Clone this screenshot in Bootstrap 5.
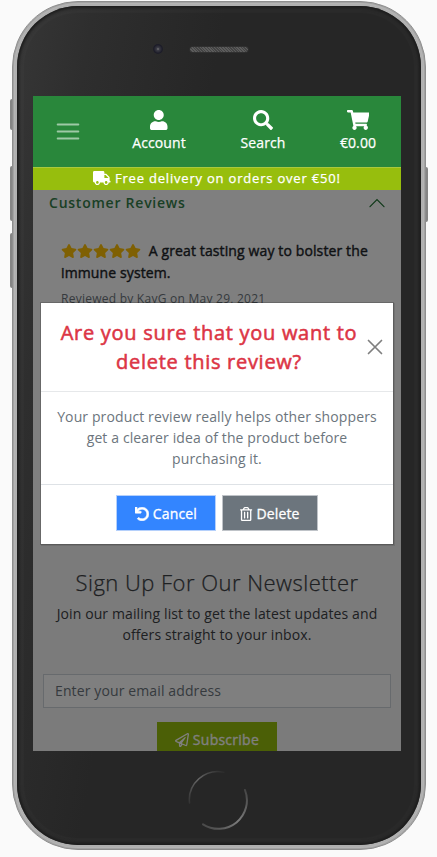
<!DOCTYPE html>
<html lang="en">
<head>
<meta charset="utf-8">
<meta name="viewport" content="width=device-width, initial-scale=1">
<title>Delete review</title>
<link rel="stylesheet" href="https://cdn.jsdelivr.net/npm/bootstrap@5.3.0/dist/css/bootstrap.min.css">
<style>
html, body { height: 857px; overflow: hidden; }
body { background: #fafafa; font-family: "Open Sans", sans-serif; font-size: 14px; line-height: 21px; color: #212529; }
.phone { width: 414px; height: 849px; margin: 1px 0 0 12px; border-radius: 66px; background: #b0b0b0; border: 1px solid #8e8e8e; box-shadow: inset 0 0 0 1px #a2a2a2, inset 0 0 0 2px #b4b4b4; padding: 4px; }
.bezel { height: 100%; border-radius: 61px; background: linear-gradient(100deg, #363636 0, #2e2e2e 14%, #262626 38%); box-shadow: inset 0 0 3px 2px #1c1c1c, inset 0 0 2px 7px rgba(255,255,255,.025); padding: 0 18px 0 16px; }
.side-key { position: absolute; width: 4px; background: #858585; border-radius: 2px 0 0 2px; }
.key-mute { left: 10px; top: 99px; height: 31px; }
.key-up { left: 10px; top: 166px; height: 55px; }
.key-down { left: 10px; top: 233px; height: 55px; }
.key-power { left: 425px; top: 167px; width: 3px; height: 55px; border-radius: 0 2px 2px 0; }
.earpiece { height: 90px; padding-top: 40px; padding-left: 104px; }
.lens { width: 10px; height: 10px; margin-top: -2px; border-radius: 50%; background: radial-gradient(circle, #777 0, #3a3a44 22%, #1c1c28 60%, #242428 100%); }
.grille { width: 60px; height: 7px; margin-left: 26px; border-radius: 4px; border: 1px solid #303030; background: repeating-linear-gradient(45deg, #5c5c5c 0 1px, #444 1px 2px); }
.screen { width: 368px; height: 655px; background: #fff; }
.top-nav { height: 71px; background: #29873b; color: #fff; }
.nav-tile { width: 104px; -webkit-text-stroke: .25px; padding-top: 14px; flex-shrink: 0; letter-spacing: .1px; }
.nav-last { width: 86px; }
.nav-tile svg { height: 20px; margin-bottom: 2px; }
.burger { width: 74px; padding-top: 21px; padding-left: 20px; text-align: left; flex-shrink: 0; }
.promo { height: 23px; font-size: 13px; line-height: 21px; background: #97be0d; border-top: 1px solid #a9c93c; color: #fff; -webkit-text-stroke: .25px; letter-spacing: .8px; }
.promo svg, .fa-inline { height: 14px; fill: currentColor; vertical-align: -2px; }
.content-area { height: 561px; }
.acc-head { height: 27px; padding: 2px 16px 0; color: #35804b; font-weight: 600; letter-spacing: .76px; }
.review { height: 323px; padding: 23px 28px 0 28px; line-height: 22px; }
.review-title { -webkit-text-stroke: .4px; letter-spacing: .12px; }
.stars { margin-right: 4px; letter-spacing: 0; }
.stars svg { width: 16px; height: 14px; fill: #ffc107; margin-top: -2px; display: inline-block; }
.review-by { font-size: 12px; color: #6c757d; margin-top: 4px; letter-spacing: .25px; }
.newsletter { height: 211px; background: #f6f6f6; padding-top: 29px; color: #3c4044; }
.news-title { font-size: 22px; line-height: 26px; font-weight: 300; margin: 0; letter-spacing: .48px; -webkit-text-stroke: .25px; }
.news-text { margin: 8px 0 29px; letter-spacing: .11px; }
.email-box { width: 348px; height: 34px; margin-left: 10px; font-size: 14px; border-radius: 0; border: 1px solid #ced4da; padding: 4px 11px 6px; letter-spacing: .12px; line-height: 21px; }
.email-box::placeholder { color: #6c757d; }
.btn-sub, .btn-flat { border-radius: 0; font-size: 14px; height: 35px; line-height: 21px; -webkit-text-stroke: .3px; padding: 6px 0; color: #fff; letter-spacing: .15px; }
.btn-sub { width: 120px; margin-top: 14px; padding-top: 5px; background: #97be0d; border: 0; letter-spacing: .25px; }
.dim { inset: 0; background: rgba(0,0,0,.5); }
.dialog-box { left: 8px; top: 113px; width: 352px; height: 241px; background: #fff; box-shadow: 0 0 0 1px rgba(0,0,0,.18), 1px 1px 0 1px rgba(0,0,0,.1); }
.dialog-head { height: 89px; border-bottom: 1px solid #e6e8ea; padding: 15px 10px 0 14px; }
.dialog-head svg { margin-top: 21px; }
.dialog-title { width: 308px; font-size: 20px; line-height: 29px; font-weight: 400; -webkit-text-stroke: .55px; color: #dc3545; letter-spacing: .71px; margin: 0; white-space: nowrap; }
.dialog-text { height: 93px; border-bottom: 1px solid #dee2e6; padding-top: 14px; color: #6c757d; letter-spacing: .12px; white-space: nowrap; }
.dialog-foot { padding-top: 10px; gap: 6px; }
.btn-cancel { width: 100px; height: 36px; background: #3385ff; border: 1px solid #b5d0fb; }
.btn-del { width: 96px; height: 36px; background: #6c757d; border: 1px solid #bfc3c8; }
.home { width: 60px; height: 60px; margin: 19px 0 0 155px; }
</style>
</head>
<body>
<div class="side-key key-mute"></div><div class="side-key key-up"></div><div class="side-key key-down"></div><div class="side-key key-power"></div>
<div class="phone position-relative">
 <div class="bezel">
  <div class="earpiece d-flex"><div class="lens ms-3"></div><div class="grille"></div></div>
  <div class="screen overflow-hidden">
   <nav class="top-nav d-flex text-center">
    <div class="burger"><svg width="30" height="30" viewBox="0 0 30 30" stroke="#fff" stroke-opacity=".55" stroke-width="2" stroke-linecap="round"><path d="M4.7 7.5h20.6M4.7 14.5h20.6M4.7 21.5h20.6"/></svg></div>
    <div class="nav-tile"><svg class="d-block mx-auto" viewBox="0 0 448 512" fill="#fff"><path d="M224 256c70.7 0 128-57.3 128-128S294.7 0 224 0 96 57.3 96 128s57.3 128 128 128zm89.6 32h-16.7c-22.2 10.2-46.9 16-72.9 16s-50.6-5.8-72.9-16h-16.7C60.2 288 0 348.2 0 422.4V464c0 26.5 21.5 48 48 48h352c26.5 0 48-21.5 48-48v-41.6c0-74.2-60.2-134.4-134.4-134.4z"/></svg>Account</div>
    <div class="nav-tile"><svg class="d-block mx-auto" viewBox="0 0 512 512" fill="#fff"><path d="M505 442.7L405.3 343c-4.5-4.5-10.6-7-17-7H372c27.6-35.3 44-79.7 44-128C416 93.1 322.9 0 208 0S0 93.1 0 208s93.1 208 208 208c48.3 0 92.7-16.4 128-44v16.3c0 6.4 2.5 12.5 7 17l99.7 99.7c9.4 9.4 24.6 9.4 33.9 0l28.3-28.3c9.4-9.4 9.4-24.6.1-34zM208 336c-70.7 0-128-57.2-128-128 0-70.7 57.2-128 128-128 70.7 0 128 57.2 128 128 0 70.7-57.2 128-128 128z"/></svg>Search</div>
    <div class="nav-tile nav-last"><svg class="d-block mx-auto" viewBox="0 0 576 512" fill="#fff"><path d="M528.12 301.319l47.273-208C578.806 78.301 567.391 64 551.99 64H159.208l-9.166-44.81C147.758 8.021 137.93 0 126.529 0H24C10.745 0 0 10.745 0 24v16c0 13.255 10.745 24 24 24h69.883l70.248 343.435C147.325 417.1 136 435.222 136 456c0 30.928 25.072 56 56 56s56-25.072 56-56c0-15.674-6.447-29.835-16.824-40h209.647C430.447 426.165 424 440.326 424 456c0 30.928 25.072 56 56 56s56-25.072 56-56c0-22.172-12.888-41.332-31.579-50.405l5.517-24.276c3.413-15.018-8.002-29.319-23.403-29.319H218.117l-6.545-32h293.145c11.206 0 20.92-7.754 23.403-18.681z"/></svg>€0.00</div>
   </nav>
   <div class="promo text-center text-nowrap"><svg viewBox="0 0 640 512"><path d="M624 352h-16V243.9c0-12.7-5.1-24.9-14.1-33.9L494 110.1c-9-9-21.2-14.1-33.9-14.1H416V48c0-26.5-21.5-48-48-48H48C21.5 0 0 21.5 0 48v320c0 26.5 21.5 48 48 48h16c0 53 43 96 96 96s96-43 96-96h128c0 53 43 96 96 96s96-43 96-96h48c8.8 0 16-7.2 16-16v-32c0-8.8-7.2-16-16-16zM160 464c-26.5 0-48-21.5-48-48s21.5-48 48-48 48 21.5 48 48-21.5 48-48 48zm320 0c-26.5 0-48-21.5-48-48s21.5-48 48-48 48 21.5 48 48-21.5 48-48 48zm80-208H416V144h44.1l99.9 99.9V256z"/></svg> Free delivery on orders over €50!</div>
   <main class="content-area position-relative">
    <div class="acc-head d-flex justify-content-between"><span>Customer Reviews</span><svg width="16" height="16" viewBox="0 0 16 16" class="mt-1" fill="none" stroke="#1d7030" stroke-width="1.2" stroke-linecap="round"><path d="M1 10.7 8 3.6l7 7.1"/></svg></div>
    <section class="review">
     <div class="review-title text-nowrap"><span class="stars"><svg viewBox="0 0 576 512"><path id="star" d="M259.3 17.8L194 150.2 47.9 171.5c-26.2 3.8-36.7 36.1-17.7 54.6l105.7 103-25 145.5c-4.5 26.3 23.2 46 46.4 33.7L288 439.6l130.7 68.7c23.2 12.2 50.9-7.4 46.4-33.7l-25-145.5 105.7-103c19-18.5 8.5-50.8-17.7-54.6L382 150.2 316.7 17.8c-11.7-23.6-45.6-23.9-57.4 0z"/></svg><svg viewBox="0 0 576 512"><use href="#star"/></svg><svg viewBox="0 0 576 512"><use href="#star"/></svg><svg viewBox="0 0 576 512"><use href="#star"/></svg><svg viewBox="0 0 576 512"><use href="#star"/></svg></span> A great tasting way to bolster the<br>immune system.</div>
     <div class="review-by">Reviewed by KayG on May 29, 2021</div>
    </section>
    <section class="newsletter text-center">
     <h2 class="news-title">Sign Up For Our Newsletter</h2>
     <p class="news-text">Join our mailing list to get the latest updates and<br>offers straight to your inbox.</p>
     <input class="form-control email-box" type="email" placeholder="Enter your email address">
     <button class="btn btn-sub"><svg class="fa-inline" viewBox="0 0 512 512"><path d="M440 6.5L24 246.4c-34.4 19.9-31.1 70.8 5.7 85.9L144 379.6V464c0 46.4 59.2 65.5 86.6 28.6l43.8-59.1 111.9 46.2c5.9 2.4 12.1 3.6 18.3 3.6 8.2 0 16.3-2.1 23.6-6.2 12.8-7.2 21.6-20 23.9-34.5l59.4-387.2c6.1-40.1-36.9-68.8-71.5-48.9zM192 464v-64.6l36.6 15.1L192 464zm212.6-28.7l-153.8-63.5L391 169.5c10.7-15.5-9.5-33.5-23.7-21.2L155.8 332.6 48 288 464 48l-59.4 387.3z"/></svg> Subscribe</button>
    </section>
    <div class="dim position-absolute"></div>
    <div class="dialog-box position-absolute text-center" role="dialog">
     <div class="dialog-head d-flex"><h5 class="dialog-title">Are you sure that you want to<br>delete this review?</h5><svg class="ms-auto" width="16" height="16" viewBox="0 0 16 16" stroke="#7f7f7f" stroke-width="1.7" stroke-linecap="round"><path d="M1.5 1.5l13 13M14.5 1.5l-13 13"/></svg></div>
     <div class="dialog-text">Your product review really helps other shoppers<br>get a clearer idea of the product before<br>purchasing it.</div>
     <div class="dialog-foot d-flex justify-content-center">
      <button class="btn btn-flat btn-cancel"><svg class="fa-inline" viewBox="0 0 512 512" stroke="currentColor" stroke-width="22"><path d="M212.333 224.333H12c-6.627 0-12-5.373-12-12V12C0 5.373 5.373 0 12 0h48c6.627 0 12 5.373 12 12v78.112C117.773 39.279 184.26 7.47 258.175 8.007c136.906.994 246.448 111.623 246.157 248.532C504.041 393.258 393.12 504 256.333 504c-64.089 0-122.496-24.313-166.51-64.215-5.099-4.622-5.334-12.554-.467-17.42l33.967-33.967c4.474-4.474 11.662-4.717 16.401-.525C170.76 415.336 211.58 432 256.333 432c97.268 0 176-78.716 176-176 0-97.267-78.716-176-176-176-58.496 0-110.28 28.476-142.274 72.333h98.274c6.627 0 12 5.373 12 12v48c0 6.627-5.373 12-12 12z"/></svg> Cancel</button>
      <button class="btn btn-flat btn-del"><svg class="fa-inline" viewBox="0 0 448 512"><path d="M268 416h24a12 12 0 0 0 12-12V188a12 12 0 0 0-12-12h-24a12 12 0 0 0-12 12v216a12 12 0 0 0 12 12zM432 80h-82.41l-34-56.7A48 48 0 0 0 274.41 0H173.59a48 48 0 0 0-41.16 23.3L98.41 80H16A16 16 0 0 0 0 96v16a16 16 0 0 0 16 16h16v336a48 48 0 0 0 48 48h288a48 48 0 0 0 48-48V128h16a16 16 0 0 0 16-16V96a16 16 0 0 0-16-16zM171.84 50.91A6 6 0 0 1 177 48h94a6 6 0 0 1 5.15 2.91L293.61 80H154.39zM368 464H80V128h288zm-212-48h24a12 12 0 0 0 12-12V188a12 12 0 0 0-12-12h-24a12 12 0 0 0-12 12v216a12 12 0 0 0 12 12z"/></svg> Delete</button>
     </div>
    </div>
   </main>
  </div>
  <svg class="home d-block" viewBox="0 0 60 60" fill="none" stroke-linecap="round"><defs><linearGradient id="g1" x1="0" y1="1" x2="1" y2="0"><stop offset="0" stop-color="#333"/><stop offset=".5" stop-color="#666"/><stop offset="1" stop-color="#2a2a2a"/></linearGradient><linearGradient id="g2" x1="0" y1="1" x2="1" y2="0"><stop offset="0" stop-color="#444"/><stop offset=".5" stop-color="#7c7c7c"/><stop offset="1" stop-color="#444"/></linearGradient></defs><path d="M1.5 33A28.5 28.5 0 0 1 36 2.2" stroke="url(#g1)" stroke-width="1.6"/><path d="M57 20A28.5 28.5 0 0 1 15 54.300" stroke="url(#g2)" stroke-width="2"/></svg>
 </div>
</div>
<script src="https://cdn.jsdelivr.net/npm/bootstrap@5.3.0/dist/js/bootstrap.bundle.min.js"></script>
</body>
</html>
